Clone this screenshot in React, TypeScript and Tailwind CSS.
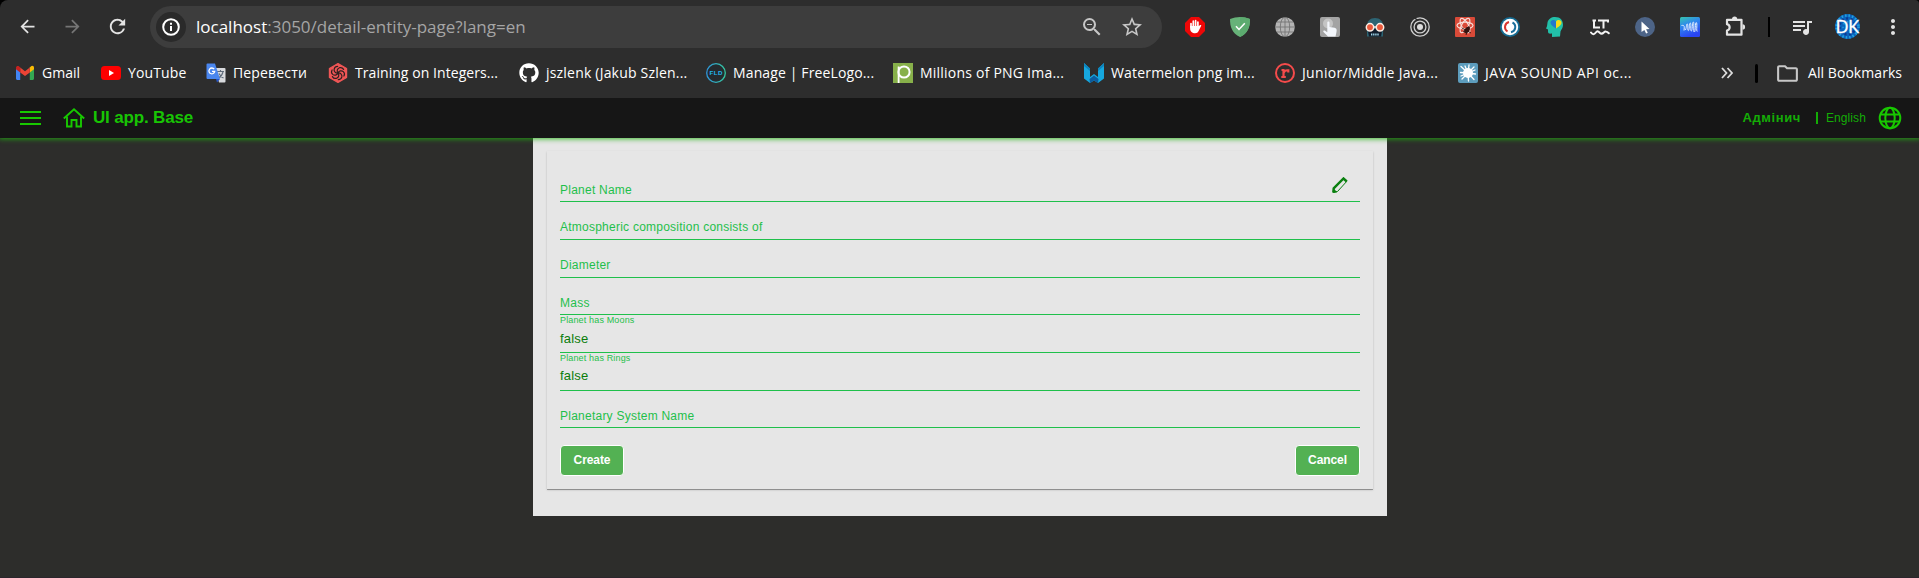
import React from "react";
import {
  MdArrowBack,
  MdArrowForward,
  MdMoreVert,
  MdOutlineFolder,
  MdOutlineZoomOut,
  MdQueueMusic,
  MdRefresh,
  MdStarBorder,
} from "react-icons/md";
import { FaGithub } from "react-icons/fa";

type Child = { children: React.ReactNode };

const Icon20 = ({ children }: Child) => (
  <svg viewBox="0 0 20 20" className="size-5 shrink-0">
    {children}
  </svg>
);

const Gmail = () => (
  <Icon20>
    <path d="M0 5v10.5c0 .9.6 1.5 1.5 1.5H4.200V8.500z" fill="#4285f4" />
    <path d="M13.800 8.500V17h2.700c.9 0 1.500-.6 1.500-1.500V5z" fill="#34a853" />
    <path d="M13.800 4.500V9.500L18 6.300V4.700c0-1.900-2-2.500-3.200-1.300z" fill="#fbbc04" />
    <path d="M4.200 9.500V4.500L9 8.200l4.800-3.700v5L9 13.100z" fill="#ea4335" />
    <path d="M0 4.700v1.600l4.200 3.200v-5L3.200 3.500C1.900 2.500 0 3.100 0 4.700z" fill="#c5221f" />
  </Icon20>
);

const YouTube = () => (
  <Icon20>
    <rect x="0" y="3" width="20" height="14" rx="3.500" fill="#f00" />
    <path d="M8 7v6l5-3z" fill="#fff" />
  </Icon20>
);

const Translate = () => (
  <Icon20>
    <path d="M9 5h9.500a1 1 0 0 1 1 1v12.500a1 1 0 0 1-1 1H13z" fill="#d8dadd" />
    <path d="M11 8.500h7M14.500 7v1.500M17 9c-.6 2.500-2.500 5-4.500 6M13 10.500c1 2 2.500 3.500 4.500 4.500" stroke="#5f6b7a" strokeWidth="1.100" fill="none" />
    <path d="M1.500 0.500H9L14 16H1.500a1 1 0 0 1-1-1V1.500a1 1 0 0 1 1-1z" fill="#4a86ee" />
    <path d="M10 16h4l-3 3.500z" fill="#2555c8" />
    <path d="M8.200 6.200A2.900 2.900 0 1 0 8.700 8.400H6" fill="none" stroke="#fff" strokeWidth="1.300" />
  </Icon20>
);

const Codewars = () => (
  <Icon20>
    <path d="M10 .6l8.600 4.800v9.200L10 19.400l-8.600-4.800V5.400z" fill="#f05656" stroke="#f05656" strokeWidth="1.200" strokeLinejoin="round" />
    <g fill="none" stroke="#2e2020" strokeWidth="1.200" strokeLinecap="round">
      {[0, 60, 120, 180, 240, 300].map((a) => (
        <path key={a} d="M10 10c-1.500-1.700-.8-4.600 1.500-5.300 1.800-.5 3.300.3 4.100 1.700" transform={`rotate(${a} 10 10)`} />
      ))}
    </g>
  </Icon20>
);

const FreeLogo = () => (
  <Icon20>
    <defs>
      <linearGradient id="flo" x1="0" x2="1">
        <stop offset="0" stopColor="#2f94d8" />
        <stop offset="1" stopColor="#35c9a0" />
      </linearGradient>
    </defs>
    <circle cx="10" cy="10" r="9.300" fill="#252b2f" stroke="url(#flo)" strokeWidth="1.300" />
    <text x="10.200" y="12.300" textAnchor="middle" fontSize="6.200" fontWeight="700" letterSpacing=".4" fontFamily="Liberation Sans, sans-serif" fill="#22b8f0">
      FLD
    </text>
  </Icon20>
);

const PngTree = () => (
  <Icon20>
    <rect width="20" height="20" fill="#87b04a" />
    <path d="M5.600 20V3.500" stroke="#fff" strokeWidth="1.800" />
    <circle cx="11" cy="9" r="5.600" fill="none" stroke="#fff" strokeWidth="2" />
  </Icon20>
);

const Watermelon = () => (
  <Icon20>
    <path d="M0 0l6 5.500V14l4-3 4 3V5.500L20 0v15.500L14 20l-4-2.500L6 20l-6-4.500z" fill="#16a7de" />
    <path d="M0 0l6 5.500V8L0 3zM20 0l-6 5.500V8l6-5z" fill="#0d84bd" />
    <path d="M5.500 16L10 12.500l4.500 3.500L14 20l-4-2.500L6 20z" fill="#0c5c9e" />
  </Icon20>
);

const Rabota = () => (
  <Icon20>
    <circle cx="10" cy="10" r="9" fill="none" stroke="#f54b4b" strokeWidth="2" />
    <path d="M6.500 7h2v7M6.300 14h4.500M8.500 10c.8-2 2.500-3 4.800-2.700V9.500" fill="none" stroke="#f54b4b" strokeWidth="2.200" />
  </Icon20>
);

const JavaSound = () => (
  <Icon20>
    <rect width="20" height="20" rx="2" fill="#5d9dbd" />
    <circle cx="10" cy="10" r="5" fill="#fff" />
    <path d="M10 10L3 3.500M10 10l1-8M10 10l6-6M10 10l7.500 1M10 10l6 6.500M10 10l.5 8M10 10l-6 6M10 10L2.500 9.500M10 10L7 3M10 10l7-3M10 10l-7 3" stroke="#fff" strokeWidth="1.300" strokeLinecap="round" />
  </Icon20>
);

const bookmarks = [
  { label: "Gmail", icon: <Gmail />, box: "w-[85px]", text: "ml-[-1px]" },
  { label: "YouTube", icon: <YouTube />, box: "w-[105px]", text: "tracking-[0.13px]" },
  { label: "Перевести", icon: <Translate />, box: "w-[122px]", text: "tracking-[0.16px]" },
  { label: "Training on Integers...", icon: <Codewars />, box: "w-[191px]", text: "tracking-[0.06px]" },
  { label: "jszlenk (Jakub Szlen...", icon: <FaGithub className="size-5 shrink-0 text-white" />, box: "w-[187px]", text: "tracking-[0.2px]" },
  { label: "Manage | FreeLogo...", icon: <FreeLogo />, box: "w-[187px]", text: "tracking-[0.13px]" },
  { label: "Millions of PNG Ima...", icon: <PngTree />, box: "w-[191px]", text: "tracking-[0.22px]" },
  { label: "Watermelon png im...", icon: <Watermelon />, box: "w-[191px]", text: "tracking-[0.18px]" },
  { label: "Junior/Middle Java...", icon: <Rabota />, box: "w-[183px]", text: "tracking-[0.33px]" },
  { label: "JAVA SOUND API ос...", icon: <JavaSound />, box: "w-[190px]", text: "tracking-[0.47px]" },
];

const extensions = [
  <Icon20 key="block">
    <path d="M6 0h8l6 6v8l-6 6H6l-6-6V6z" fill="#ee0707" />
    <path d="M6 10V6.500M8.300 10V4.200M10.600 10V3.700M12.900 10V5" stroke="#fff" strokeWidth="1.700" strokeLinecap="round" />
    <path d="M5.100 9h8.700l1.400-.9c.9-.3 1.300.3.900 1l-2.500 5c-.7 1.500-1.800 2.200-3.400 2.200-3 0-5.100-1.500-5.100-5z" fill="#fff" />
  </Icon20>,
  <Icon20 key="shield">
    <path d="M10 0c3 0 7 .8 10 2 0 8-2 14-10 18C2 16 0 10 0 2 3 .8 7 0 10 0z" fill="#67b279" />
    <path d="M10 0c3 0 7 .8 10 2 0 8-2 14-10 18z" fill="#5cab6f" />
    <path d="M6 9.300l3 3.200 5.800-6.300" fill="none" stroke="#fff" strokeWidth="1.500" />
  </Icon20>,
  <Icon20 key="globe">
    <circle cx="10" cy="10" r="9.800" fill="#b4b4b4" />
    <g fill="none" stroke="#6e6e6e" strokeWidth=".8">
      <ellipse cx="10" cy="10" rx="4.700" ry="9.800" />
      <path d="M10 0v20M0 10h20M1.700 5h16.600M1.700 15h16.600" />
    </g>
  </Icon20>,
  <Icon20 key="touch">
    <rect width="20" height="20" rx="2" fill="#a3a3a3" />
    <circle cx="8" cy="6.500" r="5" fill="#c4c4c4" />
    <path d="M7.300 5.500c0-1.400 2.200-1.400 2.200 0V10c2 .2 5 .5 6.500 1.500 1 .8.700 3 .3 4.500L15.500 19.500H8L3.500 15c-.8-1.200.5-2 1.600-1.300l2.200 1.500z" fill="#f3f6fb" />
  </Icon20>,
  <Icon20 key="face">
    <path d="M2 9C2 4 5 1 10 1s8 3 8 8v10.500H2z" fill="#2d6473" />
    <path d="M2.500 12h15l-1.500 7.500H4z" fill="#111d2c" />
    <circle cx="5" cy="10.300" r="3.700" fill="#ea5a3d" stroke="#fbeee5" strokeWidth="1.500" />
    <circle cx="15" cy="10.300" r="3.700" fill="#ea5a3d" stroke="#fbeee5" strokeWidth="1.500" />
    <path d="M8.500 10h3" stroke="#fbeee5" strokeWidth="1.400" />
    <path d="M6 17.500h8" stroke="#9ed5e8" strokeWidth="1.800" strokeDasharray="1.400 .7" />
  </Icon20>,
  <Icon20 key="rings">
    <g fill="none" stroke="#cfcfcf" strokeWidth="1.300">
      <circle cx="10" cy="10" r="9.200" />
      <circle cx="10" cy="10" r="5.900" />
    </g>
    <circle cx="10" cy="10" r="3" fill="#dcdcdc" />
    <path d="M4 .5l4 3" stroke="#2d2d2d" strokeWidth="1.500" />
  </Icon20>,
  <Icon20 key="react">
    <rect width="20" height="20" rx="1" fill="#d94a38" />
    <g fill="none" stroke="#f6ddd8" strokeWidth="1.200">
      <ellipse cx="10" cy="8.500" rx="8" ry="3.300" />
      <ellipse cx="10" cy="8.500" rx="8" ry="3.300" transform="rotate(60 10 8.500)" />
      <ellipse cx="10" cy="8.500" rx="8" ry="3.300" transform="rotate(120 10 8.500)" />
    </g>
    <ellipse cx="12" cy="13" rx="2.300" ry="3.600" transform="rotate(35 12 13)" fill="#34130f" />
    <path d="M7 11l9 5M8 15l7-5M11 18l3-9" stroke="#34130f" strokeWidth=".9" />
  </Icon20>,
  <Icon20 key="sync">
    <circle cx="10" cy="10" r="10" fill="#156c93" />
    <circle cx="10" cy="10" r="8.200" fill="#fff" />
    <path d="M9 5A5.200 5.200 0 0 0 7.500 14.500" fill="none" stroke="#d9362f" strokeWidth="2" />
    <path d="M11 15.200A5.200 5.200 0 0 0 12.500 5.500" fill="none" stroke="#1b6f9c" strokeWidth="2" />
  </Icon20>,
  <Icon20 key="head">
    <path d="M10 0c5.500 0 8 3.500 8 8 0 3-1.800 4.500-2.500 6.500L15 19.500 7 20v-3.500c-2.500.4-4 .2-4-2v-2L1 11.500C2.500 9 2 8 2.500 5.500 3.300 2 6.300 0 10 0z" fill="#22bfa8" />
    <path d="M11 11.500C7 9 5.500 7.500 5.500 5.500 5.500 3 9 2 11 4.500z" fill="#2478cc" />
    <path d="M11 11.500c4-2.500 5.500-4 5.500-6 0-2.500-3.500-3.500-5.500-1z" fill="#f7dc18" />
  </Icon20>,
  <Icon20 key="lt">
    <path d="M2.500 3.500h3.500M4 3v7.500h6M9 4.500V3.500h9v2M13.500 3.500v8" fill="none" stroke="#f3f3f3" strokeWidth="2" />
    <path d="M1 15.500c1.600 2.300 3.200 2.300 4.800 0 1.600-2 2.800-1 4 .3 1.500 1.500 2.700 1 4-.3s3-1.300 5 .8" fill="none" stroke="#f3f3f3" strokeWidth="2" strokeLinecap="round" />
  </Icon20>,
  <Icon20 key="cursor">
    <circle cx="10" cy="10" r="10" fill="#4d6487" />
    <path d="M6.500 4.500l8 7.500-3.400.2 1.700 3.600-1.700.7-1.700-3.600-2.900 2.200z" fill="#fff" />
  </Icon20>,
  <Icon20 key="wave">
    <defs>
      <linearGradient id="wv" x1="0" y1="0" x2=".4" y2="1">
        <stop offset="0" stopColor="#36c6ae" />
        <stop offset=".45" stopColor="#2f87ee" />
        <stop offset="1" stopColor="#2944f2" />
      </linearGradient>
    </defs>
    <rect width="20" height="20" rx="1.500" fill="url(#wv)" />
    <path d="M1.500 8.500c3-.5 3 .5 2.500 5M5.500 13c1.500-4 .5-6 1.800-6s-.3 6.500 1 6.500S9 6 10.300 6s-.3 8 1 8 .7-9 2-9-.3 10 1 10 .7-9.500 2-9.500-.3 9 1 9" fill="none" stroke="#e6f2ff" strokeWidth="1" />
  </Icon20>,
];

const Divider = ({ className }: { className: string }) => <span className={`bg-black ${className}`} />;

function Toolbar() {
  return (
    <div className="flex h-[52px] items-center pt-px text-[#e3e3e3]">
      <div className="flex w-[150px] shrink-0 items-center pl-[17px]">
        <MdArrowBack className="size-[21px]" />
        <MdArrowForward className="ml-6 size-[21px] text-[#757575]" />
        <MdRefresh className="ml-[23px] size-[23px]" />
      </div>
      <div className="flex h-[42px] w-[1012px] shrink-0 items-center rounded-full bg-[#3d3d3d] pl-[6px]">
        <span className="flex size-[30px] items-center justify-center rounded-full bg-[#2a2a2a]">
          <svg viewBox="0 0 18 18" className="size-[18px]" fill="none" stroke="#fff" strokeWidth="2">
            <circle cx="9" cy="9" r="7.800" />
            <path d="M9 8v5M9 4.700v2" />
          </svg>
        </span>
        <span className="ml-[10px] w-[884px] whitespace-nowrap font-['Open_Sans','Noto_Sans',sans-serif] text-[17px] leading-6 text-[#a5a5a5]">
          <span className="text-white">localhost</span>:3050/detail-entity-page?lang=en
        </span>
        <MdOutlineZoomOut className="size-6 text-[#c7c7c7]" />
        <MdStarBorder className="ml-4 size-6 text-[#c7c7c7]" />
      </div>
      <div className="ml-[23px] flex items-center gap-[25px]">{extensions}</div>
      <svg viewBox="0 0 24 24" className="ml-[23px] size-6" fill="none" stroke="#e3e3e3" strokeWidth="2.200" strokeLinejoin="round">
        <path d="M4 4.800h14.500v14.900H4v-4.200c3.500-.7 3.500-5.600 0-6.300z" />
        <path d="M9 4a2.600 2.600 0 0 1 5.200 0zM19.500 9.300a2.600 2.600 0 0 1 0 5.200z" fill="#e3e3e3" stroke="none" />
      </svg>
      <Divider className="ml-[21px] h-5 w-[2px]" />
      <MdQueueMusic className="ml-5 size-6" />
      <svg viewBox="0 0 25 25" className="ml-[21px] size-[25px]">
        <circle cx="12.500" cy="12.500" r="12.500" fill="#0b63bd" />
        <circle cx="12.500" cy="12.500" r="11" fill="none" stroke="#22a3dd" strokeWidth="2.500" strokeDasharray="1.500 2" />
        <circle cx="12.500" cy="12.500" r="8" fill="none" stroke="#0a3a92" strokeWidth="2.500" strokeDasharray="2 2.500" />
        <circle cx="12.500" cy="12.500" r="4.500" fill="none" stroke="#1d93d2" strokeWidth="2" strokeDasharray="1.500 2.500" />
        <text x="12.500" y="18.500" textAnchor="middle" fontSize="16.500" fontFamily="Lato, sans-serif" fill="#fff" stroke="#fff" strokeWidth=".3">
          DK
        </text>
      </svg>
      <MdMoreVert className="ml-[21px] size-6" />
    </div>
  );
}

function Bookmarks() {
  return (
    <div className="flex h-[46px] items-center whitespace-nowrap pl-4 pb-[4px] font-['Open_Sans','Noto_Sans',sans-serif] text-[14px] leading-5 text-white">
      {bookmarks.map((b) => (
        <div key={b.label} className={`flex shrink-0 items-center gap-[7px] ${b.box}`}>
          {b.icon}
          <span className={b.text}>{b.label}</span>
        </div>
      ))}
      <svg viewBox="0 0 12 12" className="ml-[73px] size-3" fill="none" stroke="#dcdcdc" strokeWidth="1.800">
        <path d="M1 1l4.500 5L1 11M6.500 1L11 6l-4.500 5" />
      </svg>
      <Divider className="ml-[22px] h-[19px] w-[3px] rounded-full" />
      <MdOutlineFolder className="ml-[17px] size-[25px] text-[#c7c7c7]" />
      <span className="ml-[8px] tracking-[0.06px]">All Bookmarks</span>
    </div>
  );
}

function AppHeader() {
  return (
    <header className="relative z-10 flex h-10 items-center bg-[#161616] pl-5 font-['Liberation_Sans',Arial,sans-serif] text-[#18c404] shadow-[0_0_5px_1px_rgba(30,176,14,0.85)]">
      <svg viewBox="0 0 21 14" className="h-[14px] w-[21px]" stroke="#18c800" strokeWidth="2">
        <path d="M0 1h21M0 7h21M0 13h21" />
      </svg>
      <svg viewBox="0 0 22 20" className="ml-[22px] h-5 w-[22px]" fill="none" stroke="#18c800" strokeWidth="1.900">
        <path d="M.8 10.500L11 1.300l10.200 9.200" />
        <path d="M4 8.500V18.500h4.500V12h5v6.500H18V8.500" />
      </svg>
      <span className="ml-[8px] text-[17px] font-bold leading-5 tracking-[-0.16px]">UI app. Base</span>
      <div className="ml-auto flex items-center pr-[17px] text-[12px] text-[#14ac06]">
        <span className="mr-[15px] text-[13px] font-bold tracking-[0.6px]">Адмінич</span>
        <span className="h-3 w-[2px] bg-[#14ac06]" />
        <span className="ml-2 mr-3 tracking-[0.1px]">English</span>
        <svg viewBox="0 0 24 24" className="size-6" fill="none" stroke="#18c800" strokeWidth="2">
          <circle cx="12" cy="12" r="10.300" />
          <ellipse cx="12" cy="12" rx="4.700" ry="10.300" />
          <path d="M2.500 8.500h19M2.500 15.500h19" />
        </svg>
      </div>
    </header>
  );
}

const fields = [
  { label: "Planet Name", row: "h-[51px] pb-[3px]", edit: true },
  { label: "Atmospheric composition consists of", row: "h-[38px] pb-[4px]" },
  { label: "Diameter", row: "h-[38px] pb-[4px]" },
  { label: "Mass", row: "h-[37px] pb-[3px]" },
  { label: "Planet has Moons", value: "false", row: "h-[38px] pb-[5px]" },
  { label: "Planet has Rings", value: "false", row: "h-[38px] pb-[6px]" },
  { label: "Planetary System Name", row: "h-[37px] pb-[3px]" },
];

function EntityForm() {
  return (
    <main className="mx-auto mr-[532px] w-[854px] bg-[#e6e6e6] px-[14px] pt-[13px] pb-[27px] font-['Liberation_Sans',Arial,sans-serif]">
      <form className="h-[338px] px-[13px] shadow-[0_1px_0_rgba(0,0,0,0.28),0_1px_2px_rgba(0,0,0,0.2)]">
        {fields.map((f) => (
          <div key={f.label} className={`flex justify-between border-b border-[#1fc04b] ${f.row}`}>
            {f.value ? (
              <div className="flex h-full flex-col justify-between text-[#0a7d0a]">
                <span className="text-[9px] leading-[11px] tracking-[0.15px] text-[#1fc04b]">{f.label}</span>
                <span className="text-[13px] leading-4 tracking-[0.2px]">{f.value}</span>
              </div>
            ) : (
              <span className="self-end text-[12px] leading-4 tracking-[0.24px] text-[#1fc04b]">{f.label}</span>
            )}
            {f.edit && (
              <svg viewBox="0 0 16 17" className="mr-3 mb-[4px] h-[17px] w-4 self-end" fill="none" stroke="#0a800f">
                <path d="M1.300 15.500l.4-4.200L11.500 1.500l3.300 3" strokeWidth="2.400" />
                <path d="M14.800 4.300L5.500 14.500l-4.200 1" strokeWidth="1" />
                <path d="M1.500 12l3.500 3-3.700.5z" fill="#0a800f" strokeWidth=".5" />
              </svg>
            )}
          </div>
        ))}
        <div className="flex justify-between pt-[17px] text-[12px] font-bold tracking-[-0.1px] text-white">
          <button type="button" className="h-[31px] w-16 rounded border border-white bg-[#53b153] pb-px">Create</button>
          <button type="button" className="h-[31px] w-[65px] rounded border border-white bg-[#53b153] pb-px">Cancel</button>
        </div>
      </form>
    </main>
  );
}

export default function App() {
  return (
    <div className="h-[578px] w-[1919px] overflow-hidden bg-black">
      <div className="h-full rounded-tl-lg rounded-tr border-b border-[#2b252c] bg-[#2d2d2d]">
        <Toolbar />
        <Bookmarks />
        <div className="h-[479px] overflow-hidden bg-[#2d2d2b]">
          <AppHeader />
          <EntityForm />
        </div>
      </div>
    </div>
  );
}
